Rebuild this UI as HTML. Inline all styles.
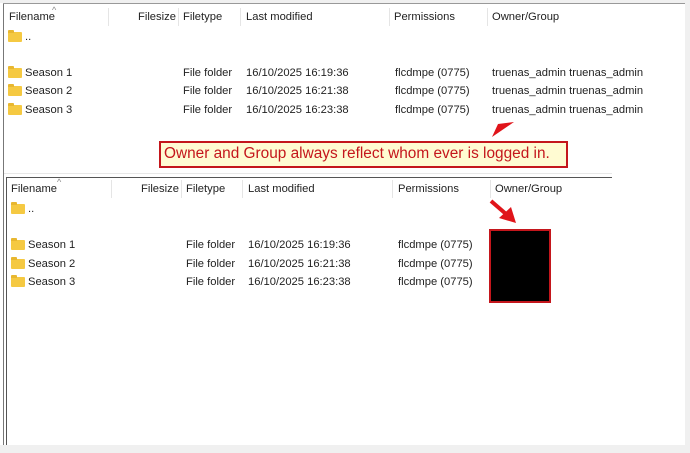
<!DOCTYPE html>
<html><head><style>
body{margin:0;width:690px;height:453px;background:#f0f0f0;position:relative;overflow:hidden;font-family:"Liberation Sans",sans-serif;font-size:11.2px;color:#222}
.bg{position:absolute;left:0;top:3px;width:685px;height:442px;background:#fff}
.t{position:absolute;white-space:nowrap;line-height:14px}
.f{position:absolute;width:14px;height:10px;background:#f5c942;border-radius:1px}
.f:before{content:"";position:absolute;left:0;top:-2px;width:6px;height:3px;background:#e8b730;border-radius:1px 1px 0 0}
.sep{position:absolute;width:1px;height:18px;background:#e5e5e5}
.v{position:absolute;background:#777}
.c{position:absolute;font-size:9px;color:#888;line-height:9px}
</style></head><body>
<div class="bg"></div>
<div class="v" style="left:3px;top:3px;width:1px;height:442px"></div>
<div class="v" style="left:6px;top:178px;width:1px;height:267px;background:#555"></div>
<div style="position:absolute;left:3px;top:3px;width:682px;height:1px;background:#999"></div>
<div style="position:absolute;left:6px;top:177px;width:606px;height:1px;background:#555"></div>
<div style="position:absolute;left:4px;top:173px;width:608px;height:1px;background:#e8e8e8"></div>

<!-- top header -->
<div class="t" style="left:9px;top:10px">Filename</div>
<div class="c" style="left:52px;top:6px">^</div>
<div class="sep" style="left:108px;top:8px"></div>
<div class="t" style="left:138px;top:10px">Filesize</div>
<div class="sep" style="left:178px;top:8px"></div>
<div class="t" style="left:183px;top:10px">Filetype</div>
<div class="sep" style="left:240px;top:8px"></div>
<div class="t" style="left:246px;top:10px">Last modified</div>
<div class="sep" style="left:389px;top:8px"></div>
<div class="t" style="left:394px;top:10px">Permissions</div>
<div class="sep" style="left:487px;top:8px"></div>
<div class="t" style="left:492px;top:10px">Owner/Group</div>

<div class="f" style="left:8px;top:32px"></div><div class="t" style="left:25px;top:30px">..</div>
<div class="f" style="left:8px;top:68px"></div><div class="t" style="left:25px;top:66px">Season 1</div>
<div class="f" style="left:8px;top:86px"></div><div class="t" style="left:25px;top:84px">Season 2</div>
<div class="f" style="left:8px;top:105px"></div><div class="t" style="left:25px;top:103px">Season 3</div>
<div class="t" style="left:183px;top:66px">File folder</div>
<div class="t" style="left:183px;top:84px">File folder</div>
<div class="t" style="left:183px;top:103px">File folder</div>
<div class="t" style="left:246px;top:66px">16/10/2025 16:19:36</div>
<div class="t" style="left:246px;top:84px">16/10/2025 16:21:38</div>
<div class="t" style="left:246px;top:103px">16/10/2025 16:23:38</div>
<div class="t" style="left:395px;top:66px">flcdmpe (0775)</div>
<div class="t" style="left:395px;top:84px">flcdmpe (0775)</div>
<div class="t" style="left:395px;top:103px">flcdmpe (0775)</div>
<div class="t" style="left:492px;top:66px">truenas_admin truenas_admin</div>
<div class="t" style="left:492px;top:84px">truenas_admin truenas_admin</div>
<div class="t" style="left:492px;top:103px">truenas_admin truenas_admin</div>

<!-- callout -->
<div style="position:absolute;left:159px;top:141px;width:405px;height:23px;border:2px solid #c4161c;background:#fffbd2"></div>
<div class="t" style="left:164px;top:145px;font-size:15.4px;line-height:18px;color:#c4161c">Owner and Group always reflect whom ever is logged in.</div>

<!-- bottom header -->
<div class="t" style="left:11px;top:182px">Filename</div>
<div class="c" style="left:57px;top:178px">^</div>
<div class="sep" style="left:111px;top:180px"></div>
<div class="t" style="left:141px;top:182px">Filesize</div>
<div class="sep" style="left:181px;top:180px"></div>
<div class="t" style="left:186px;top:182px">Filetype</div>
<div class="sep" style="left:242px;top:180px"></div>
<div class="t" style="left:248px;top:182px">Last modified</div>
<div class="sep" style="left:392px;top:180px"></div>
<div class="t" style="left:398px;top:182px">Permissions</div>
<div class="sep" style="left:490px;top:180px"></div>
<div class="t" style="left:495px;top:182px">Owner/Group</div>

<div class="f" style="left:11px;top:204px"></div><div class="t" style="left:28px;top:202px">..</div>
<div class="f" style="left:11px;top:240px"></div><div class="t" style="left:28px;top:238px">Season 1</div>
<div class="f" style="left:11px;top:259px"></div><div class="t" style="left:28px;top:257px">Season 2</div>
<div class="f" style="left:11px;top:277px"></div><div class="t" style="left:28px;top:275px">Season 3</div>
<div class="t" style="left:186px;top:238px">File folder</div>
<div class="t" style="left:186px;top:257px">File folder</div>
<div class="t" style="left:186px;top:275px">File folder</div>
<div class="t" style="left:248px;top:238px">16/10/2025 16:19:36</div>
<div class="t" style="left:248px;top:257px">16/10/2025 16:21:38</div>
<div class="t" style="left:248px;top:275px">16/10/2025 16:23:38</div>
<div class="t" style="left:398px;top:238px">flcdmpe (0775)</div>
<div class="t" style="left:398px;top:257px">flcdmpe (0775)</div>
<div class="t" style="left:398px;top:275px">flcdmpe (0775)</div>

<div style="position:absolute;left:489px;top:229px;width:58px;height:70px;border:2px solid #c4161c;background:#000"></div>

<svg style="position:absolute;left:0;top:0" width="690" height="453">
<polygon points="492,137 514,122 498,124" fill="#e0141a"/>
<line x1="491" y1="201" x2="506" y2="214" stroke="#e0141a" stroke-width="4"/>
<polygon points="516,223 499,218 511,207" fill="#e0141a"/>
</svg>
</body></html>
